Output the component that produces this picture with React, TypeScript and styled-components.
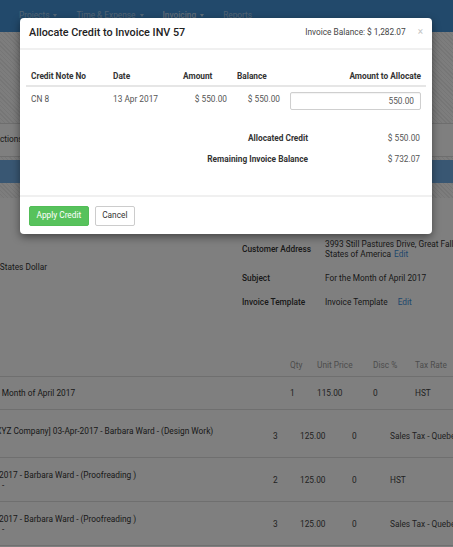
import styled, { createGlobalStyle } from 'styled-components';

const GlobalStyle = createGlobalStyle`
  html, body {
    margin: 0;
    padding: 0;
  }
  body {
    font-family: Roboto, 'Liberation Sans', Arial, sans-serif;
    font-size: 8.3px;
    line-height: 1.2;
    color: #444;
    background: #fff;
    overflow: hidden;
  }
  * {
    box-sizing: border-box;
  }
`;

const hatch = 'repeating-linear-gradient(45deg, #ececec 0 1px, #fafafa 1px 3px)';

const Page = styled.div`
  position: relative;
  width: 453px;
  height: 547px;
  overflow: hidden;
  background: ${hatch};
`;

const Navbar = styled.nav`
  height: 32px;
  background: #4592d6;
  display: flex;
  align-items: center;
  gap: 19px;
  padding-left: 19px;
`;

const NavItem = styled.span<{ $active?: boolean }>`
  display: flex;
  align-items: center;
  gap: 4px;
  color: ${(p) => (p.$active ? 'rgba(255,255,255,0.65)' : 'rgba(255,255,255,0.5)')};
  font-weight: ${(p) => (p.$active ? 500 : 400)};
  white-space: nowrap;
`;

const Caret = styled.span`
  width: 0;
  height: 0;
  border-left: 2.5px solid transparent;
  border-right: 2.5px solid transparent;
  border-top: 3px solid currentColor;
`;

const Spacer = styled.div<{ $h: number }>`
  height: ${(p) => p.$h}px;
`;

const ActionsBar = styled.div`
  height: 34px;
  background: #fff;
  border-top: 1px solid #dcdcdc;
  border-bottom: 1px solid #dcdcdc;
  display: flex;
  align-items: center;
  color: #333;
`;

const ActionsLabel = styled.span`
  margin-left: -5.5px;
  white-space: nowrap;
`;

const BlueBar = styled.div`
  height: 23px;
  background: #72aee6;
`;

const Content = styled.div`
  background: #fff;
  padding-top: 34px;
  min-height: 400px;
`;

const Details = styled.div`
  display: grid;
  grid-template-columns: 242px 1fr;
`;

const LeftField = styled.div`
  padding-top: 30px;
  line-height: 10px;
  color: #333;
  white-space: nowrap;
  margin-left: -26px;
`;

const DetailRow = styled.div`
  display: grid;
  grid-template-columns: 83px 1fr;
  align-items: center;
  padding: 7px 0;
  line-height: 10px;
  white-space: nowrap;
`;

const DetailLabel = styled.span`
  color: #333;
  font-weight: 500;
`;

const DetailValue = styled.span`
  color: #333;
`;

const EditLink = styled.a<{ $gap?: number }>`
  color: #3d8fd9;
  margin-left: ${(p) => p.$gap ?? 3}px;
  text-decoration: none;
`;

const Items = styled.div`
  margin-top: 39px;
`;

const ItemGrid = styled.div<{ $cols: string; $h: number; $head?: boolean }>`
  display: grid;
  grid-template-columns: ${(p) => p.$cols};
  align-items: center;
  height: ${(p) => p.$h}px;
  background: #fff;
  border-bottom: 1px solid #dedede;
  color: ${(p) => (p.$head ? '#9a9a9a' : '#444')};
  white-space: nowrap;
  line-height: 10px;
`;

const ItemDesc = styled.div<{ $shift: number }>`
  margin-left: ${(p) => p.$shift}px;
  color: #333;
  overflow: hidden;
`;

const SubLine = styled.div`
  padding-left: 3px;
`;

const GroupGap = styled.div`
  height: 4px;
`;

/* ---------- modal ---------- */

const Backdrop = styled.div`
  position: absolute;
  inset: 0;
  background: rgba(0, 0, 0, 0.5);
`;

const Modal = styled.div`
  position: absolute;
  left: 20px;
  top: 18px;
  width: 412px;
  background: #fff;
  border-radius: 4px;
  box-shadow: 0 3px 9px rgba(0, 0, 0, 0.45);
`;

const ModalHeader = styled.div`
  height: 32px;
  display: flex;
  align-items: center;
  padding: 0 9px;
  border-bottom: 2px solid #f0f0f0;
`;

const ModalTitle = styled.h4`
  margin: 0;
  font-size: 10.8px;
  font-weight: 500;
  color: #222;
`;

const Balance = styled.span`
  margin-left: auto;
  color: #444;
`;

const Close = styled.span`
  margin-left: 12px;
  color: #c4c4c4;
  font-size: 10px;
  margin-top: -3px;
`;

const ModalBody = styled.div`
  padding: 15px 6px 26px;
`;

const CreditTable = styled.div`
  display: grid;
  grid-template-columns: 82px 70px 54px 53px 141px;
`;

const Th = styled.div<{ $right?: boolean }>`
  padding: 5px 5px 3px;
  line-height: 12px;
  font-weight: 700;
  color: #333;
  text-align: ${(p) => (p.$right ? 'right' : 'left')};
  border-bottom: 2px solid #e6e6e6;
`;

const Td = styled.div<{ $right?: boolean }>`
  padding: 5px;
  line-height: 14px;
  color: #555;
  text-align: ${(p) => (p.$right ? 'right' : 'left')};
`;

const AmountInput = styled.input`
  display: block;
  width: 100%;
  height: 18px;
  border: 1px solid #cfcfcf;
  border-radius: 2px;
  padding: 0 6px;
  text-align: right;
  font: inherit;
  color: #555;
  box-shadow: inset 0 1px 1px rgba(0, 0, 0, 0.05);
  outline: none;
`;

const Totals = styled.div`
  margin-top: 12px;
  display: grid;
  grid-template-columns: 1fr 112px;
`;

const TotalLabel = styled.div`
  padding: 4.5px 6px 4.5px 0;
  line-height: 12px;
  text-align: right;
  font-weight: 700;
  color: #333;
`;

const TotalValue = styled.div`
  padding: 4.5px 6px 4.5px 0;
  line-height: 12px;
  text-align: right;
  color: #555;
`;

const ModalFooter = styled.div`
  border-top: 2px solid #f0f0f0;
  padding: 9px 9px 8px;
  display: flex;
  gap: 6px;
`;

const Button = styled.button<{ $primary?: boolean }>`
  height: 20px;
  padding: 0 6.5px;
  font: inherit;
  border-radius: 2px;
  border: 1px solid ${(p) => (p.$primary ? '#52bd57' : '#cccccc')};
  background: ${(p) => (p.$primary ? '#57c25c' : '#fff')};
  color: ${(p) => (p.$primary ? '#fff' : '#333')};
  cursor: pointer;
`;

const firstCols = '290px 27px 56px 42px 1fr';
const lineCols = '273px 27px 52px 38px 1fr';

const lines = [
  { desc: '[XYZ Company] 03-Apr-2017 - Barbara Ward - (Design Work)', shift: -6, sub: '\u00a0', qty: 3, tax: 'Sales Tax - Quebec' },
  { desc: '2017 - Barbara Ward - (Proofreading )', shift: -1, sub: '-', qty: 2, tax: 'HST' },
  { desc: '2017 - Barbara Ward - (Proofreading )', shift: -1, sub: '-', qty: 3, tax: 'Sales Tax - Quebec' },
];

export default function App() {
  return (
    <>
      <GlobalStyle />
      <Page>
        <Navbar>
          <NavItem>Projects <Caret /></NavItem>
          <NavItem>Time &amp; Expense <Caret /></NavItem>
          <NavItem $active>Invoicing <Caret /></NavItem>
          <NavItem>Reports</NavItem>
        </Navbar>
        <Spacer $h={91} />
        <ActionsBar>
          <ActionsLabel>Actions:</ActionsLabel>
        </ActionsBar>
        <Spacer $h={3} />
        <BlueBar />
        <Spacer $h={15} />
        <Content>
          <Details>
            <LeftField>United States Dollar</LeftField>
            <div>
              <DetailRow>
                <DetailLabel>Customer Address</DetailLabel>
                <DetailValue>
                  3993 Still Pastures Drive, Great Falls, VA 22066 United
                  <br />
                  States of America<EditLink>Edit</EditLink>
                </DetailValue>
              </DetailRow>
              <DetailRow>
                <DetailLabel>Subject</DetailLabel>
                <DetailValue>For the Month of April 2017</DetailValue>
              </DetailRow>
              <DetailRow>
                <DetailLabel>Invoice Template</DetailLabel>
                <DetailValue>
                  Invoice Template<EditLink $gap={10}>Edit</EditLink>
                </DetailValue>
              </DetailRow>
            </div>
          </Details>

          <Items>
            <ItemGrid $cols={firstCols} $h={24} $head>
              <span />
              <span>Qty</span>
              <span>Unit Price</span>
              <span>Disc %</span>
              <span>Tax Rate</span>
            </ItemGrid>
            <ItemGrid $cols={firstCols} $h={33}>
              <ItemDesc $shift={-26}>For the Month of April 2017</ItemDesc>
              <span>1</span>
              <span>115.00</span>
              <span>0</span>
              <span>HST</span>
            </ItemGrid>
            <GroupGap />
            {lines.map((l, i) => (
              <ItemGrid key={i} $cols={lineCols} $h={44}>
                <ItemDesc $shift={l.shift}>
                  <div>{l.desc}</div>
                  <SubLine>{l.sub}</SubLine>
                </ItemDesc>
                <span>{l.qty}</span>
                <span>125.00</span>
                <span>0</span>
                <span>{l.tax}</span>
              </ItemGrid>
            ))}
          </Items>
        </Content>

        <Backdrop />
        <Modal>
          <ModalHeader>
            <ModalTitle>Allocate Credit to Invoice INV 57</ModalTitle>
            <Balance>Invoice Balance: $ 1,282.07</Balance>
            <Close>×</Close>
          </ModalHeader>
          <ModalBody>
            <CreditTable>
              <Th>Credit Note No</Th>
              <Th>Date</Th>
              <Th>Amount</Th>
              <Th>Balance</Th>
              <Th $right>Amount to Allocate</Th>
              <Td>CN 8</Td>
              <Td>13 Apr 2017</Td>
              <Td $right>$ 550.00</Td>
              <Td $right>$ 550.00</Td>
              <Td>
                <AmountInput defaultValue="550.00" readOnly />
              </Td>
            </CreditTable>
            <Totals>
              <TotalLabel>Allocated Credit</TotalLabel>
              <TotalValue>$ 550.00</TotalValue>
              <TotalLabel>Remaining Invoice Balance</TotalLabel>
              <TotalValue>$ 732.07</TotalValue>
            </Totals>
          </ModalBody>
          <ModalFooter>
            <Button $primary>Apply Credit</Button>
            <Button>Cancel</Button>
          </ModalFooter>
        </Modal>
      </Page>
    </>
  );
}
